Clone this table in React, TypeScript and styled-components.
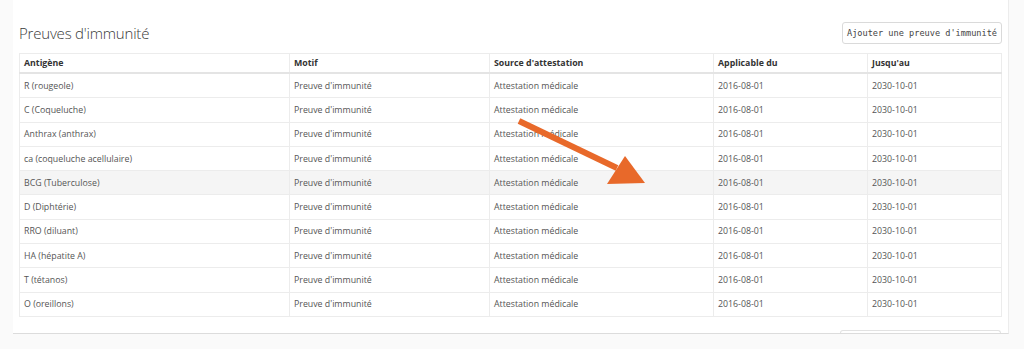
import styled, { createGlobalStyle } from "styled-components";

const GlobalStyle = createGlobalStyle`
    body {
        margin: 0;
        background: #f9f9f9;
        font-family: "Open Sans", "Liberation Sans", sans-serif;
    }
`;

const Page = styled.div`
    position: relative;
    width: 1024px;
    height: 349px;
    background: #fafafa;
    overflow: hidden;
`;

const Panel = styled.div`
    margin-left: 13px;
    width: 996px;
    height: 334px;
    box-sizing: border-box;
    background: #fff;
    border-bottom: 1px solid #dcdcdc;
    border-right: 1px solid #ececec;
    padding: 14px 7px 0 6px;
    overflow: hidden;
    display: flex;
    flex-direction: column;
    & > * {
        flex-shrink: 0;
    }
`;

const Header = styled.div`
    display: flex;
    justify-content: space-between;
    align-items: center;
    height: 38px;
    margin-bottom: 1px;
`;

const Title = styled.h3`
    margin: 0;
    font-size: 15px;
    font-weight: 300;
    color: #3a3a3a;
    letter-spacing: -0.2px;
`;

const Button = styled.button`
    font-family: "DejaVu Sans Mono", "Liberation Mono", monospace;
    font-size: 8.6px;
    color: #444;
    background: #fff;
    border: 1px solid #dadada;
    border-radius: 3px;
    height: 22px;
    padding: 0 4px;
    margin-right: -1px;
`;

const Table = styled.table`
    width: 982px;
    border-collapse: collapse;
    border: 1px solid #e6e6e6;
    table-layout: fixed;
    font-size: 8.8px;
`;

const Th = styled.th<{ $w: number }>`
    width: ${(p) => p.$w - 9}px;
    text-align: left;
    font-weight: 700;
    color: #333;
    height: 18px;
    padding: 0 4px;
    border: 1px solid #ececec;
    border-bottom: 2px solid #e4e4e4;
`;

const Row = styled.tr<{ $hover?: boolean }>`
    background: ${(p) => (p.$hover ? "#f5f5f5" : "#fff")};
`;

const Td = styled.td`
    height: 23.3px;
    padding: 0 4px;
    color: #555;
    border: 1px solid #ececec;
    white-space: nowrap;
    overflow: hidden;
`;

const Footer = styled.div`
    display: flex;
    justify-content: flex-end;
    margin-top: 13px;
`;

// top edge of the next button, cut by the panel's bottom
const ButtonEdge = styled.div`
    width: 159px;
    height: 6px;
    border: 1px solid #e2e2e2;
    border-bottom: none;
    border-radius: 3px 3px 0 0;
`;

const Arrow = styled.svg`
    position: absolute;
    left: 0;
    top: 0;
    pointer-events: none;
`;

const columns = [
    { label: "Antigène", w: 270 },
    { label: "Motif", w: 200 },
    { label: "Source d'attestation", w: 224 },
    { label: "Applicable du", w: 154 },
    { label: "Jusqu'au", w: 134 },
];

const antigens = [
    "R (rougeole)",
    "C (Coqueluche)",
    "Anthrax (anthrax)",
    "ca (coqueluche acellulaire)",
    "BCG (Tuberculose)",
    "D (Diphtérie)",
    "RRO (diluant)",
    "HA (hépatite A)",
    "T (tétanos)",
    "O (oreillons)",
];

export default function App() {
    return (
        <Page>
            <GlobalStyle />
            <Panel>
                <Header>
                    <Title>Preuves d'immunité</Title>
                    <Button>Ajouter une preuve d'immunité</Button>
                </Header>
                <Table>
                    <thead>
                        <tr>
                            {columns.map((c) => (
                                <Th key={c.label} $w={c.w}>
                                    {c.label}
                                </Th>
                            ))}
                        </tr>
                    </thead>
                    <tbody>
                        {antigens.map((a, i) => (
                            <Row key={a} $hover={i === 4}>
                                <Td>{a}</Td>
                                <Td>Preuve d'immunité</Td>
                                <Td>Attestation médicale</Td>
                                <Td>2016-08-01</Td>
                                <Td>2030-10-01</Td>
                            </Row>
                        ))}
                    </tbody>
                </Table>
                <Footer>
                    <ButtonEdge />
                </Footer>
            </Panel>
            {/* annotation arrow drawn over the table */}
            <Arrow width="1024" height="349" viewBox="0 0 1024 349">
                <line x1="519" y1="121" x2="617" y2="168" stroke="#e8692a" strokeWidth="6" />
                <polygon points="645,183 625,156 607,184" fill="#e8692a" />
            </Arrow>
        </Page>
    );
}
